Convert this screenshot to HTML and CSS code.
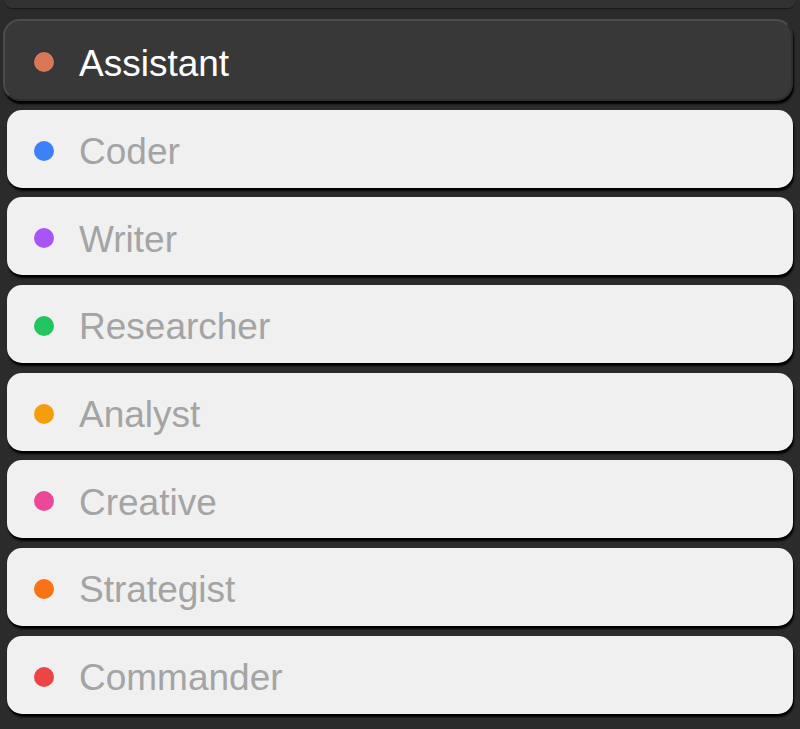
FILE: index.html
```html
<!DOCTYPE html>
<html>
<head>
<meta charset="utf-8">
<link rel="stylesheet" href="styles.css">
</head>
<body>
<div class="panel">
  <div class="prev"></div>
  <ul class="list">
    <li class="item active"><span class="dot dot-assistant"></span><span class="name">Assistant</span></li>
    <li class="item"><span class="dot dot-coder"></span><span class="name">Coder</span></li>
    <li class="item"><span class="dot dot-writer"></span><span class="name">Writer</span></li>
    <li class="item"><span class="dot dot-researcher"></span><span class="name">Researcher</span></li>
    <li class="item"><span class="dot dot-analyst"></span><span class="name">Analyst</span></li>
    <li class="item"><span class="dot dot-creative"></span><span class="name">Creative</span></li>
    <li class="item"><span class="dot dot-strategist"></span><span class="name">Strategist</span></li>
    <li class="item"><span class="dot dot-commander"></span><span class="name">Commander</span></li>
  </ul>
</div>
</body>
</html>
```

FILE: styles.css
```css
html, body {
  margin: 0;
  padding: 0;
  background: #2b2b2b;
  height: 100%;
  overflow: hidden;
}
body {
  font-family: "Liberation Sans", Arial, sans-serif;
}
.panel {
  display: flex;
  flex-direction: column;
}
.prev {
  height: 8px;
  margin: 0 4px;
  background: #323232;
  border-radius: 0 0 12px 12px;
  box-shadow: 0 1px 1px rgba(0,0,0,0.4);
}
.list {
  list-style: none;
  margin: 0;
  padding: 0;
  display: flex;
  flex-direction: column;
  gap: 9.67px;
}
.item {
  box-sizing: border-box;
  height: 78px;
  margin: 0 7px 0 7px;
  background: #f0f0f0;
  border-radius: 15px;
  box-shadow: 1px 3px 2px #000;
  display: flex;
  align-items: center;
  padding-left: 27px;
  padding-top: 4px;
  gap: 25px;
}
.item.active {
  height: 82px;
  margin: 11px 7px -1px 3px;
  background: #383838;
  border: 2px solid #4c4c4c;
  border-bottom-color: #2e2e2e;
  border-right-color: #2e2e2e;
  border-radius: 17px;
  box-shadow: 1px 3px 2px #000;
  padding-left: 29px;
  padding-top: 4px;
}
.dot {
  width: 20px;
  height: 20px;
  border-radius: 50%;
  flex: none;
}
.name {
  font-size: 37px;
  color: #a4a4a4;
  line-height: 1;
  position: relative;
  top: 1px;
}
.active .name {
  color: #ffffff;
}
.dot-assistant { background: #d97757; box-shadow: 0 0 0 1px #2a3a40; }
.dot-coder { background: #3b82f6; }
.dot-writer { background: #a855f7; }
.dot-researcher { background: #22c55e; }
.dot-analyst { background: #f59e0b; }
.dot-creative { background: #ec4899; }
.dot-strategist { background: #f97316; }
.dot-commander { background: #ef4444; }
```
